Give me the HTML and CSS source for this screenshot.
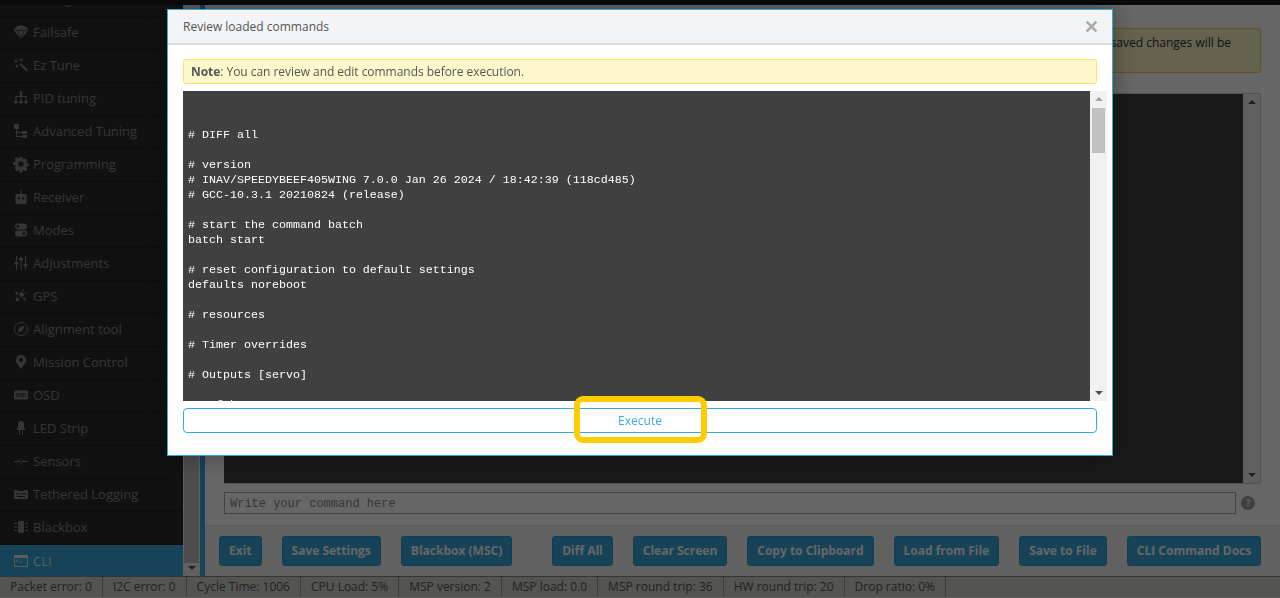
FILE: index.html
```html
<!DOCTYPE html>
<html lang="en">
<head>
<meta charset="utf-8">
<title>INAV Configurator CLI</title>
<link rel="stylesheet" href="styles.css">
</head>
<body>
<div class="app">
  <div class="topbar"></div>
  <div class="main">
    <nav class="sidebar">
      <ul class="menu">
        <li class="item"><svg class="ic" viewBox="0 0 14 14"><path d="M5 0h4v3H5zM2 5h10v3H2z"/></svg>Configuration</li>
        <li class="item"><svg class="ic" viewBox="0 0 14 14"><path d="M7 .5C3 .5 0 3 0 5.800L6.500 13.500h1L14 5.800C14 3 11 .5 7 .5z"/><path class="cut" d="M.5 6L3 5l2 1 2-1 2 1 2-1 2.500 1M3.500 5.500L6.800 13M10.500 5.500L7.200 13"/></svg>Failsafe</li>
        <li class="item"><svg class="ic" viewBox="0 0 14 14"><path d="M5.500 6.500l1.500-1.500 7 7-1.500 1.500zM2 1l.7 1.300L4 3l-1.300.7L2 5l-.7-1.300L0 3l1.300-.7zM7 0l.5 1.300L9 2l-1.500.7L7 4l-.5-1.300L5 2l1.500-.7zM3 6l.5 1.300L5 8l-1.500.7L3 10l-.5-1.300L1 8l1.500-.7z"/></svg>Ez Tune</li>
        <li class="item"><svg class="ic" viewBox="0 0 14 14"><path d="M7 0a1.500 1.500 0 011 2.600V5h4.500v4.300a1.800 1.800 0 11-1 0V6H7.500v3.300a1.800 1.800 0 11-1 0V6h-4v3.300a1.800 1.800 0 11-1 0V5H6V2.600A1.500 1.500 0 017 0z"/></svg>PID tuning</li>
        <li class="item"><svg class="ic" viewBox="0 0 14 14"><path d="M0 0h5v5H0zM2 5.500h1V8h5V7h5v3H8V9H3v3h5v-1h5v3H8v-1H2z"/></svg>Advanced Tuning</li>
        <li class="item"><svg class="ic" viewBox="0 0 14 14"><path fill-rule="evenodd" d="M5.800 0h2.400l.4 2 1.300.6 1.800-1.100 1.700 1.700-1.100 1.800.5 1.300 2.100.4v2.400l-2.100.4-.5 1.300 1.100 1.800-1.700 1.700-1.800-1.100-1.300.5-.4 2.100H5.800l-.4-2.100-1.300-.5-1.800 1.100L.6 11.100l1.100-1.800-.5-1.300L-.9 7.600V5.200l2.100-.4.500-1.300L.6 1.700 2.300 0l1.800 1.100L5.400 .6zM7 4.300a2.700 2.700 0 100 5.400 2.700 2.700 0 000-5.400z"/></svg>Programming</li>
        <li class="item"><svg class="ic" viewBox="0 0 14 14"><path fill-rule="evenodd" d="M6.500 0h1v4H11a1.500 1.500 0 011.500 1.500v7A1.500 1.500 0 0111 14H3a1.500 1.500 0 01-1.500-1.500v-7A1.500 1.500 0 013 4h3.500zM4.800 7a1.200 1.200 0 100 2.400 1.200 1.200 0 000-2.400zm4.400 0a1.200 1.200 0 100 2.400 1.200 1.200 0 000-2.400z"/></svg>Receiver</li>
        <li class="item"><svg class="ic" viewBox="0 0 14 14"><path fill-rule="evenodd" d="M4 .5h6a3 3 0 010 6H4a3 3 0 010-6zm0 1.500a1.500 1.500 0 100 3 1.500 1.500 0 000-3zM4 7.500h6a3 3 0 010 6H4a3 3 0 010-6zm6 1.500a1.500 1.500 0 100 3 1.500 1.500 0 000-3z"/></svg>Modes</li>
        <li class="item"><svg class="ic" viewBox="0 0 14 14"><path d="M2 0h1v6h1.500v2.500H3V14H2V8.500H.5V6H2zM6.500 0h1v2h1.500v2.500H7.500V14h-1V4.500H5V2h1.500zM11 0h1v8h1.500v2.500H12V14h-1v-3.500H9.500V8H11z"/></svg>Adjustments</li>
        <li class="item"><svg class="ic" viewBox="0 0 14 14"><path d="M4.500 5.500l3-3 3 3-3 3zM1 4l1.500-1.500 2 2L3 6zM8.500 9.500L10 8l2 2-1.500 1.500zM3 8l3 3c-1 1-3 1.500-4 .5S2 9 3 8zM9 0l1 1-1 1-1-1zM12 3l1 1-1 1-1-1z"/></svg>GPS</li>
        <li class="item"><svg class="ic" viewBox="0 0 14 14"><circle class="line" cx="7" cy="7" r="6.500"/><path d="M10.500 3.500L8.500 8.500 3.500 10.500 5.500 5.500z"/></svg>Alignment tool</li>
        <li class="item"><svg class="ic" viewBox="0 0 14 14"><path fill-rule="evenodd" d="M7 0a5 5 0 015 5c0 3-3.500 7-5 9-1.500-2-5-6-5-9a5 5 0 015-5zm0 3a2 2 0 100 4 2 2 0 000-4z"/></svg>Mission Control</li>
        <li class="item"><svg class="ic" viewBox="0 0 14 14"><rect x="0" y="2.500" width="14" height="9" rx="1.500"/><text class="osd" x="7" y="9.300" text-anchor="middle">OSD</text></svg>OSD</li>
        <li class="item"><svg class="ic" viewBox="0 0 14 14"><path d="M7 0a3 3 0 013 3v4h1v2H3V7h1V3a3 3 0 013-3zM5 9.500h1V14H5zM8 9.500h1V14H8z"/></svg>LED Strip</li>
        <li class="item"><svg class="ic" viewBox="0 0 14 14"><path d="M0 7h4.500l1-2.500 1.500 6 1.500-5L9.500 7H14v1H9l-.5-1-1.500 5-1.700-6L5 8H0z"/></svg>Sensors</li>
        <li class="item"><svg class="ic" viewBox="0 0 14 14"><path fill-rule="evenodd" d="M1 3h3v1h6V3h3a1 1 0 011 1v7a1 1 0 01-1 1H1a1 1 0 01-1-1V4a1 1 0 011-1zm1 3v1.500h1.500V6zm3 0v1.500h1.500V6zm3 0v1.500h1.500V6zm2.500 0v1.500H12V6zM3 9v1h8V9z"/></svg>Tethered Logging</li>
        <li class="item"><svg class="ic" viewBox="0 0 14 14"><path d="M4.500 1h5A.5.500 0 0110 1.500v11a.5.500 0 01-.5.500h-5a.5.500 0 01-.5-.5v-11a.5.500 0 01.5-.5zM0 3h3v1H0zM0 6.500h3v1H0zM0 10h3v1H0zM11 3h3v1h-3zM11 6.500h3v1h-3zM11 10h3v1h-3z"/></svg>Blackbox</li>
        <li class="item active"><svg class="ic" viewBox="0 0 14 14"><path fill-rule="evenodd" d="M1 1h12a1 1 0 011 1v10a1 1 0 01-1 1H1a1 1 0 01-1-1V2a1 1 0 011-1zm0 3v8h12V4zm1 1l2 1.500L2 8zM5 7.500h3v.8H5z"/></svg>CLI</li>
      </ul>
      <div class="side-scroll">
        <span class="arrow-up dim"></span>
        <span class="side-track"></span>
        <span class="arrow-down dim"></span>
      </div>
    </nav>
    <div class="bluebar"></div>
    <section class="content">
      <div class="tab">
        <div class="warn">
          <p class="warn-line">Note: Leaving CLI tab or pressing Disconnect will automatically send exit to the board. With some firmwares, all unsaved changes will be</p>
          <p class="warn-last">lost.</p>
        </div>
        <div class="cli-window">
          <div class="cli-out"></div>
          <div class="cli-scroll"><span class="arrow-up dim"></span><span class="arrow-down dim"></span></div>
        </div>
        <div class="cli-input-row">
          <div class="cli-input">Write your command here</div>
          <svg class="help" viewBox="0 0 14 14"><circle cx="7" cy="7" r="7"/><text class="q" x="7" y="11" text-anchor="middle">?</text></svg>
        </div>
      </div>
      <div class="toolbar">
        <span class="btn">Exit</span>
        <span class="btn">Save Settings</span>
        <span class="btn btn-far">Blackbox (MSC)</span>
        <span class="btn">Diff All</span>
        <span class="btn">Clear Screen</span>
        <span class="btn">Copy to Clipboard</span>
        <span class="btn">Load from File</span>
        <span class="btn">Save to File</span>
        <span class="btn">CLI Command Docs</span>
      </div>
    </section>
  </div>
  <footer class="status">
    <span class="stat">Packet error: 0</span>
    <span class="stat">I2C error: 0</span>
    <span class="stat">Cycle Time: 1006</span>
    <span class="stat">CPU Load: 5%</span>
    <span class="stat">MSP version: 2</span>
    <span class="stat">MSP load: 0.0</span>
    <span class="stat">MSP round trip: 36</span>
    <span class="stat">HW round trip: 20</span>
    <span class="stat">Drop ratio: 0%</span>
  </footer>
</div>
<div class="overlay"></div>
<div class="modal">
  <header class="modal-head">
    <span class="modal-title">Review loaded commands</span>
    <svg class="close" viewBox="0 0 12 12"><path d="M1.500 1.500l9 9M10.500 1.500l-9 9"/></svg>
  </header>
  <div class="modal-body">
    <div class="note"><b class="note-b">Note</b>: You can review and edit commands before execution.</div>
    <div class="editor">
      <pre class="code">


# DIFF all

# version
# INAV/SPEEDYBEEF405WING 7.0.0 Jan 26 2024 / 18:42:39 (118cd485)
# GCC-10.3.1 20210824 (release)

# start the command batch
batch start

# reset configuration to default settings
defaults noreboot

# resources

# Timer overrides

# Outputs [servo]

# safehome</pre>
      <div class="editor-scroll">
        <span class="arrow-up"></span>
        <span class="thumb"></span>
        <span class="arrow-down"></span>
      </div>
    </div>
    <div class="exec">Execute</div>
  </div>
  <div class="highlight"></div>
</div>
</body>
</html>
```
FILE: styles.css
```css
* { box-sizing: border-box; }
html, body { margin: 0; height: 100%; overflow: hidden; }
body { font-family: "Open Sans", sans-serif; font-size: 12px; color: #303030; background: #fff; }
.app { display: flex; flex-direction: column; height: 598px; }
.topbar { height: 5px; background: #1b1b1b; flex: none; position: relative; z-index: 1; }
.main { flex: 1; display: flex; min-height: 0; }

.sidebar { width: 200px; display: flex; flex: none; background: #2b2b2b; }
.menu { list-style: none; margin: -21px 0 0; padding: 0; width: 183px; flex: none; }
.item { height: 33px; display: flex; align-items: center; padding: 0 0 2px 14px; gap: 5px; font-size: 13px; color: #868686; border-bottom: 1px solid #1f1f1f; white-space: nowrap; }
.item.active { background: #37a8db; color: #e8e8e8; border-bottom: 0; }
.ic { width: 14px; height: 14px; fill: currentColor; flex: none; overflow: visible; }
.ic .line { fill: none; stroke: currentColor; stroke-width: 1; }
.ic .cut { fill: none; stroke: #2b2b2b; stroke-width: .8; }
.ic .osd { font: bold 5px "Open Sans", sans-serif; fill: #2b2b2b; }
.side-scroll { width: 17px; background: #f1f1f1; display: flex; flex-direction: column; align-items: center; }
.side-track { flex: 1; width: 15px; background: #c1c1c1; margin: 8px 0 3px; }

.arrow-up, .arrow-down { width: 0; height: 0; border-left: 4px solid transparent; border-right: 4px solid transparent; flex: none; }
.arrow-up { border-bottom: 4px solid #a3a3a3; margin-top: 6px; }
.arrow-down { border-top: 4px solid #505050; margin-bottom: 6px; }
.arrow-up.dim { border-bottom-color: #505050; }

.bluebar { width: 5px; flex: none; background: #37a8db; }
.content { flex: 1; display: flex; flex-direction: column; min-width: 0; }
.tab { flex: 1; padding: 23px 19px 0; min-height: 0; border-bottom: 1px solid #e0e0e0; }
.warn { height: 45px; background: #fff5c8; border: 1px solid #e8d24f; border-radius: 3px; padding: 5px 29px 0 10px; }
.warn-line { margin: 0; font-size: 12px; line-height: 17px; text-align: right; white-space: nowrap; color: #303030; }
.warn-last { margin: 0; font-size: 12px; line-height: 17px; color: #303030; }
.cli-window { display: flex; height: 391px; margin-top: 20px; border: 1px solid #ccc; border-width: 1px 1px 1px 0; border-radius: 3px; background: #f1f1f1; }
.cli-out { flex: 1; background: #404040; }
.cli-scroll { width: 17px; display: flex; flex-direction: column; align-items: center; justify-content: space-between; }
.cli-input-row { display: flex; align-items: center; gap: 5px; margin-top: 8px; }
.cli-input { width: 1012px; height: 22px; border: 1px solid #aaa; font: 12px/23px "Liberation Mono", monospace; color: #8a8a8a; padding-left: 5px; overflow: hidden; }
.help { width: 14px; height: 14px; fill: #a0a0a0; }
.help .q { font: bold 11px "Open Sans", sans-serif; fill: #e0e0e0; }

.toolbar { height: 50px; flex: none; display: flex; align-items: center; padding: 0 20px 0 14px; gap: 20px; background: #f2f2f2; }
.btn { height: 30px; display: flex; align-items: center; padding: 0 9px 2px; background: #37a8db; border: 1px solid #2f9bcc; border-radius: 3px; color: #fff; font-weight: 700; font-size: 12px; white-space: nowrap; }
.btn-far { margin-right: 20px; }

.status { height: 22px; flex: none; display: flex; background: #d3d3c8; border-top: 1px solid #888; border-bottom: 1px solid #eee; font-size: 12px; color: #555; line-height: 20px; }
.stat { padding: 0 10px; border-right: 1px solid #999; }

.overlay { position: fixed; inset: 0; z-index: 2; background: rgba(0, 0, 0, .6); }

.modal { position: fixed; z-index: 3; left: 167px; top: 9px; width: 946px; height: 447px; background: #fff; border: 1px solid #37a8db; box-shadow: 0 0 24px rgba(0, 0, 0, .35); }
.modal-head { height: 35px; display: flex; align-items: center; justify-content: space-between; padding: 0 14px 0 15px; background: #f3f4f6; border-bottom: 2px solid #ddd; }
.modal-title { font-size: 12px; color: #555; }
.close { width: 13px; height: 13px; fill: none; stroke: #aaa; stroke-width: 2.400; }
.modal-body { padding: 14px 15px 0; }
.note { height: 25px; background: #fef7cc; border: 1px solid #ffe55f; border-radius: 3px; padding-left: 7px; font-size: 12px; line-height: 23px; letter-spacing: -.04px; color: #555; }
.note-b { font-weight: 700; color: #555; }
.editor { display: flex; width: 924px; height: 310px; margin-top: 7px; }
.code { flex: 1; margin: 0; padding: 7px 5px 0; background: #404040; color: #fff; font: 11.670px/15px "Liberation Mono", monospace; overflow: hidden; }
.editor-scroll { width: 17px; flex: none; background: #f1f1f1; display: flex; flex-direction: column; align-items: center; }
.editor-scroll .arrow-up { margin-top: 6px; }
.thumb { width: 13px; height: 45px; background: #c1c1c1; margin-top: 7px; }
.editor-scroll .arrow-down { margin-top: auto; }
.exec { width: 914px; height: 25px; margin-top: 7px; border: 1px solid #37a8db; border-radius: 4px; text-align: center; line-height: 23px; color: #3fa9de; font-size: 12px; }
.highlight { position: absolute; left: 406px; top: 386px; width: 133px; height: 47px; border: 6px solid #fc0; border-radius: 9px; }
```
